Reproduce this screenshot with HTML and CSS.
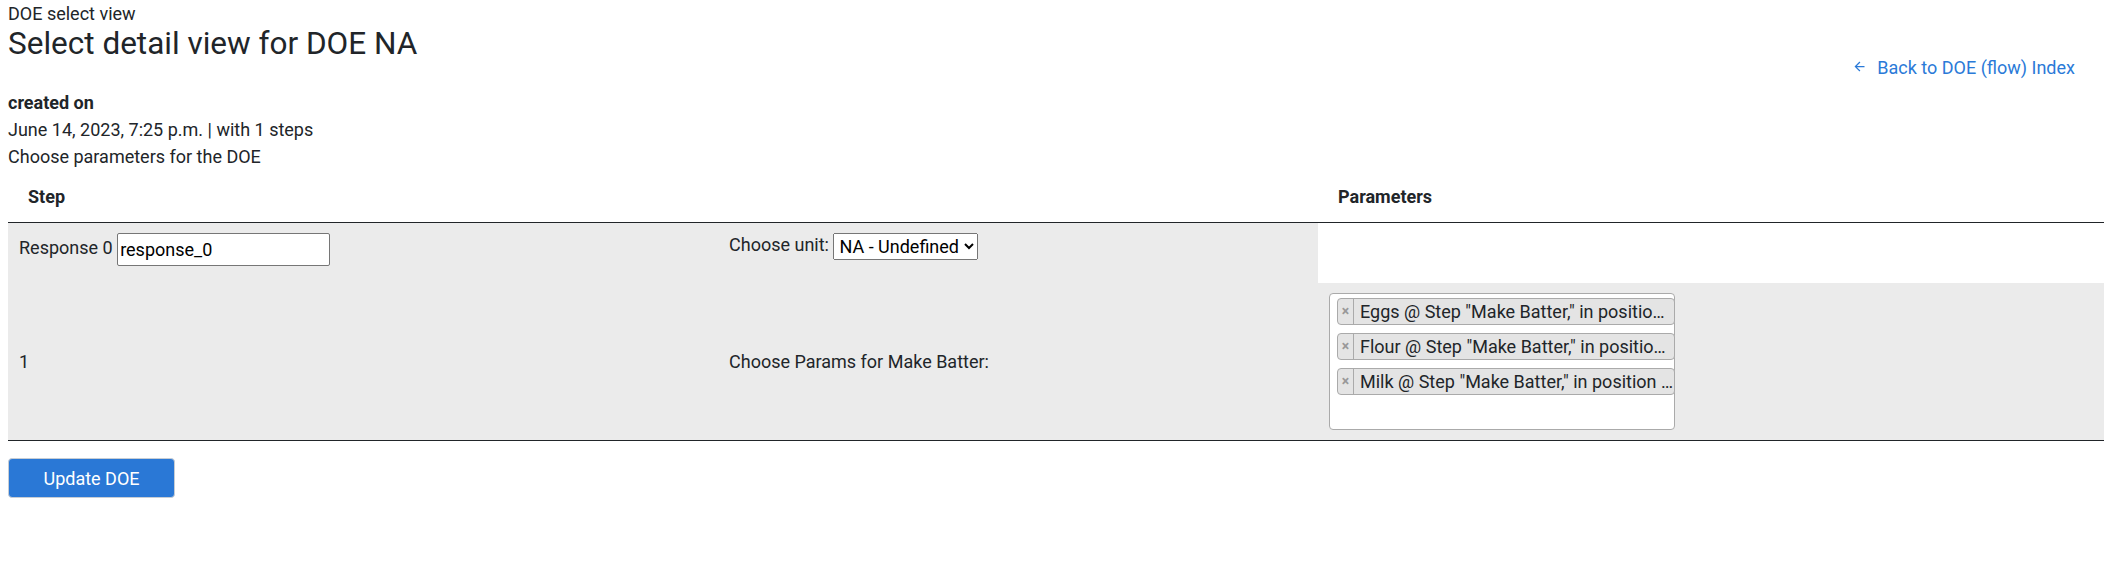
FILE: index.html
```html
<!DOCTYPE html>
<html lang="en">
<head>
    <meta charset="UTF-8">
    <meta name="viewport" content="width=device-width, initial-scale=1.0">
    <title>DOE select view</title>
    <link rel="stylesheet" href="styles.css">
</head>
<body>
    <div class="page">
        <div class="page-header">
            <div class="titles">
                <div class="crumb">DOE select view</div>
                <h1>Select detail view for DOE NA</h1>
            </div>
            <a class="back-link" href="#">
                <svg width="15" height="15" viewBox="0 0 24 24"><path d="M20 11H7.83l5.59-5.59L12 4l-8 8 8 8 1.41-1.41L7.83 13H20v-2z" fill="currentColor"/></svg>
                Back to DOE (flow) Index
            </a>
        </div>

        <div class="info">
            <p class="label">created on</p>
            <p>June 14, 2023, 7:25 p.m. | with 1 steps</p>
            <p>Choose parameters for the DOE</p>
        </div>

        <form class="doe-form">
            <table class="doe-table">
                <colgroup>
                    <col class="col-step">
                    <col class="col-choose">
                    <col>
                </colgroup>
                <thead>
                    <tr>
                        <th>Step</th>
                        <th></th>
                        <th>Parameters</th>
                    </tr>
                </thead>
                <tbody>
                    <tr class="response-row">
                        <td>Response 0 <input type="text" class="text-input" value="response_0"></td>
                        <td>Choose unit: <select class="unit-select"><option>NA - Undefined</option></select></td>
                        <td class="blank"></td>
                    </tr>
                    <tr>
                        <td>1</td>
                        <td>Choose Params for Make Batter:</td>
                        <td>
                            <div class="multi-select">
                                <ul class="choices">
                                    <li class="choice" title='Eggs @ Step "Make Batter," in position 1'><span class="remove">&times;</span><span class="choice-text">Eggs @ Step "Make Batter," in positio…</span></li>
                                    <li class="choice" title='Flour @ Step "Make Batter," in position 2'><span class="remove">&times;</span><span class="choice-text">Flour @ Step "Make Batter," in positio…</span></li>
                                    <li class="choice" title='Milk @ Step "Make Batter," in position 3'><span class="remove">&times;</span><span class="choice-text">Milk @ Step "Make Batter," in position …</span></li>
                                </ul>
                            </div>
                        </td>
                    </tr>
                </tbody>
            </table>
            <button type="button" class="btn-primary">Update DOE</button>
        </form>
    </div>
</body>
</html>
```

FILE: styles.css
```css
body {
    margin: 0;
    font-family: Roboto, "Liberation Sans", sans-serif;
    color: #212529;
    background-color: white;
}
.page {
    padding: 0 0 0 8px;
}
.page-header {
    display: flex;
    justify-content: space-between;
    align-items: flex-end;
}
.crumb {
    font-size: 18px;
    line-height: 27px;
}
.page-header h1 {
    margin: 0 0 20px 0;
    font-size: 31.5px;
    font-weight: 400;
    line-height: 34px;
}
.back-link {
    display: flex;
    align-items: center;
    gap: 10px;
    margin-right: 29px;
    font-size: 18px;
    line-height: 27px;
    color: #2a7ad8;
    text-decoration: none;
}
.back-link svg {
    margin-top: -3px;
}
.info {
    margin-top: 8px;
    font-size: 18px;
    line-height: 27px;
}
.info p {
    margin: 0;
}
.info .label {
    font-weight: 700;
}
.doe-table {
    width: 100%;
    table-layout: fixed;
    border-collapse: collapse;
    font-size: 18px;
}
.col-step {
    width: 710px;
}
.col-choose {
    width: 600px;
}
.doe-table th {
    height: 52px;
    padding: 0 20px;
    text-align: left;
    font-weight: 700;
    border-bottom: 1px solid #212529;
}
.doe-table td {
    padding: 10px 11px;
    background-color: #ebebeb;
    vertical-align: middle;
}
.doe-table tbody tr:last-child td {
    border-bottom: 1px solid #212529;
}
.response-row td {
    vertical-align: top;
    padding-bottom: 17px;
}
.response-row td.blank {
    background-color: white;
}
.text-input {
    width: 213px;
    height: 33px;
    box-sizing: border-box;
    padding: 2px 2px;
    border: 1px solid #767676;
    border-radius: 2px;
    font-family: inherit;
    font-size: 18px;
    color: black;
    vertical-align: middle;
}
.unit-select {
    padding: 1px 2px 1px 1px;
    font-family: inherit;
    font-size: 18px;
    color: black;
    vertical-align: middle;
}
.multi-select {
    width: 346px;
    height: 137px;
    box-sizing: border-box;
    border: 1px solid #aaa;
    border-radius: 4px;
    background-color: white;
}
.choices {
    list-style: none;
    margin: 0;
    padding: 4px 0 0 7px;
    display: flex;
    flex-direction: column;
    gap: 8px;
}
.choice {
    display: flex;
    height: 27px;
    box-sizing: border-box;
    background-color: #e4e4e4;
    border: 1px solid #aaa;
    border-radius: 4px;
    margin-right: -1px;
    overflow: hidden;
}
.remove {
    width: 15px;
    flex: none;
    border-right: 1px solid #aaa;
    color: #999;
    font-weight: 700;
    font-size: 14px;
    line-height: 25px;
    text-align: center;
}
.choice-text {
    padding: 0 0 0 6px;
    line-height: 25px;
    white-space: nowrap;
}
.btn-primary {
    display: block;
    margin-top: 17px;
    width: 167px;
    height: 40px;
    background-color: #2a78d6;
    color: white;
    border: 1px solid #c7cdd4;
    border-radius: 4px;
    font-family: inherit;
    font-size: 18px;
    cursor: pointer;
}
```
